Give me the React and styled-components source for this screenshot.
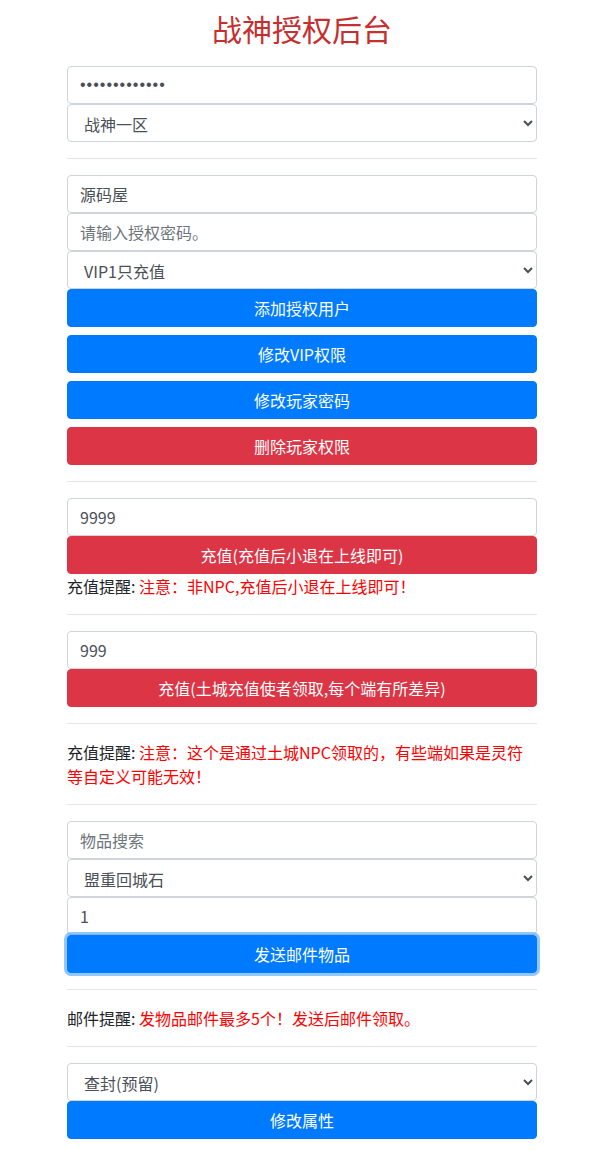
import React from "react";
import styled, { createGlobalStyle } from "styled-components";

const GlobalStyle = createGlobalStyle`
  * { box-sizing: border-box; }
  body {
    margin: 0;
    background: #fff;
    color: #212529;
    font-family: "Noto Sans CJK SC", "Noto Sans", "Liberation Sans", sans-serif;
    font-size: 16px;
    line-height: 1.5;
  }
`;

const Container = styled.div`
  width: 473px;
  margin: 0 auto;
  padding: 0 3px 13px 0;
`;

const Title = styled.h1`
  margin: 0;
  padding: 7px 0 8px;
  height: 66px;
  text-align: center;
  font-size: 30px;
  font-weight: 400;
  line-height: 1.4;
  color: #c62f2f;
`;

const Field = styled.input`
  display: block;
  width: 100%;
  height: 38px;
  margin: 0;
  padding: 6px 12px;
  font-family: ${({ type }) =>
    type === "password" ? '"Liberation Sans", sans-serif' : "inherit"};
  letter-spacing: ${({ type }) => (type === "password" ? "1px" : "normal")};
  font-size: 16px;
  line-height: 1.5;
  color: #495057;
  background: #fff;
  border: 1px solid #ced4da;
  border-radius: 4px;
  outline: none;

  &::placeholder {
    color: #6c757d;
  }
`;

const Picker = styled.select`
  display: block;
  width: 100%;
  height: 38px;
  margin: 0;
  padding: 6px 12px;
  font-family: inherit;
  font-size: 16px;
  color: #495057;
  background: #fff;
  border: 1px solid #ced4da;
  border-radius: 4px;
  outline: none;
`;

const Button = styled.button`
  display: block;
  width: 100%;
  height: 38px;
  padding: 6px 12px;
  font-family: inherit;
  font-size: 16px;
  line-height: 1.5;
  color: #fff;
  background: ${({ variant }) => (variant === "danger" ? "#dc3545" : "#007bff")};
  border: 1px solid ${({ variant }) => (variant === "danger" ? "#dc3545" : "#007bff")};
  border-radius: 4px;
  box-shadow: ${({ focused }) => (focused ? "0 0 0 3px rgba(38, 143, 255, 0.5)" : "none")};
  cursor: pointer;

  & + & {
    margin-top: 8px;
  }
`;

const Divider = styled.hr`
  margin: 16px 0;
  border: 0;
  border-top: 1px solid rgba(0, 0, 0, 0.1);
`;

const Notice = styled.p`
  margin: 0;
`;

const Warn = styled.span`
  color: #ff0000;
`;

export default function App() {
  return (
    <>
      <GlobalStyle />
      <Container>
        <Title>战神授权后台</Title>

        <Field type="password" defaultValue="1234567890123" />
        <Picker defaultValue="1">
          <option value="1">战神一区</option>
        </Picker>

        <Divider />

        <Field type="text" defaultValue="源码屋" />
        <Field type="text" placeholder="请输入授权密码。" />
        <Picker defaultValue="vip1">
          <option value="vip1">VIP1只充值</option>
        </Picker>
        <div>
          <Button>添加授权用户</Button>
          <Button>修改VIP权限</Button>
          <Button>修改玩家密码</Button>
          <Button variant="danger">删除玩家权限</Button>
        </div>

        <Divider />

        <Field type="text" defaultValue="9999" />
        <Button variant="danger">充值(充值后小退在上线即可)</Button>
        <Notice>
          充值提醒: <Warn>注意：非NPC,充值后小退在上线即可！</Warn>
        </Notice>

        <Divider />

        <Field type="text" defaultValue="999" />
        <Button variant="danger">充值(土城充值使者领取,每个端有所差异)</Button>

        <Divider />

        <Notice>
          充值提醒: <Warn>注意：这个是通过土城NPC领取的，有些端如果是灵符等自定义可能无效！</Warn>
        </Notice>

        <Divider />

        <Field type="text" placeholder="物品搜索" />
        <Picker defaultValue="item">
          <option value="item">盟重回城石</option>
        </Picker>
        <Field type="text" defaultValue="1" />
        <Button focused>发送邮件物品</Button>

        <Divider />

        <Notice>
          邮件提醒: <Warn>发物品邮件最多5个！发送后邮件领取。</Warn>
        </Notice>

        <Divider />

        <Picker defaultValue="cf">
          <option value="cf">查封(预留)</option>
        </Picker>
        <Button>修改属性</Button>
      </Container>
    </>
  );
}
